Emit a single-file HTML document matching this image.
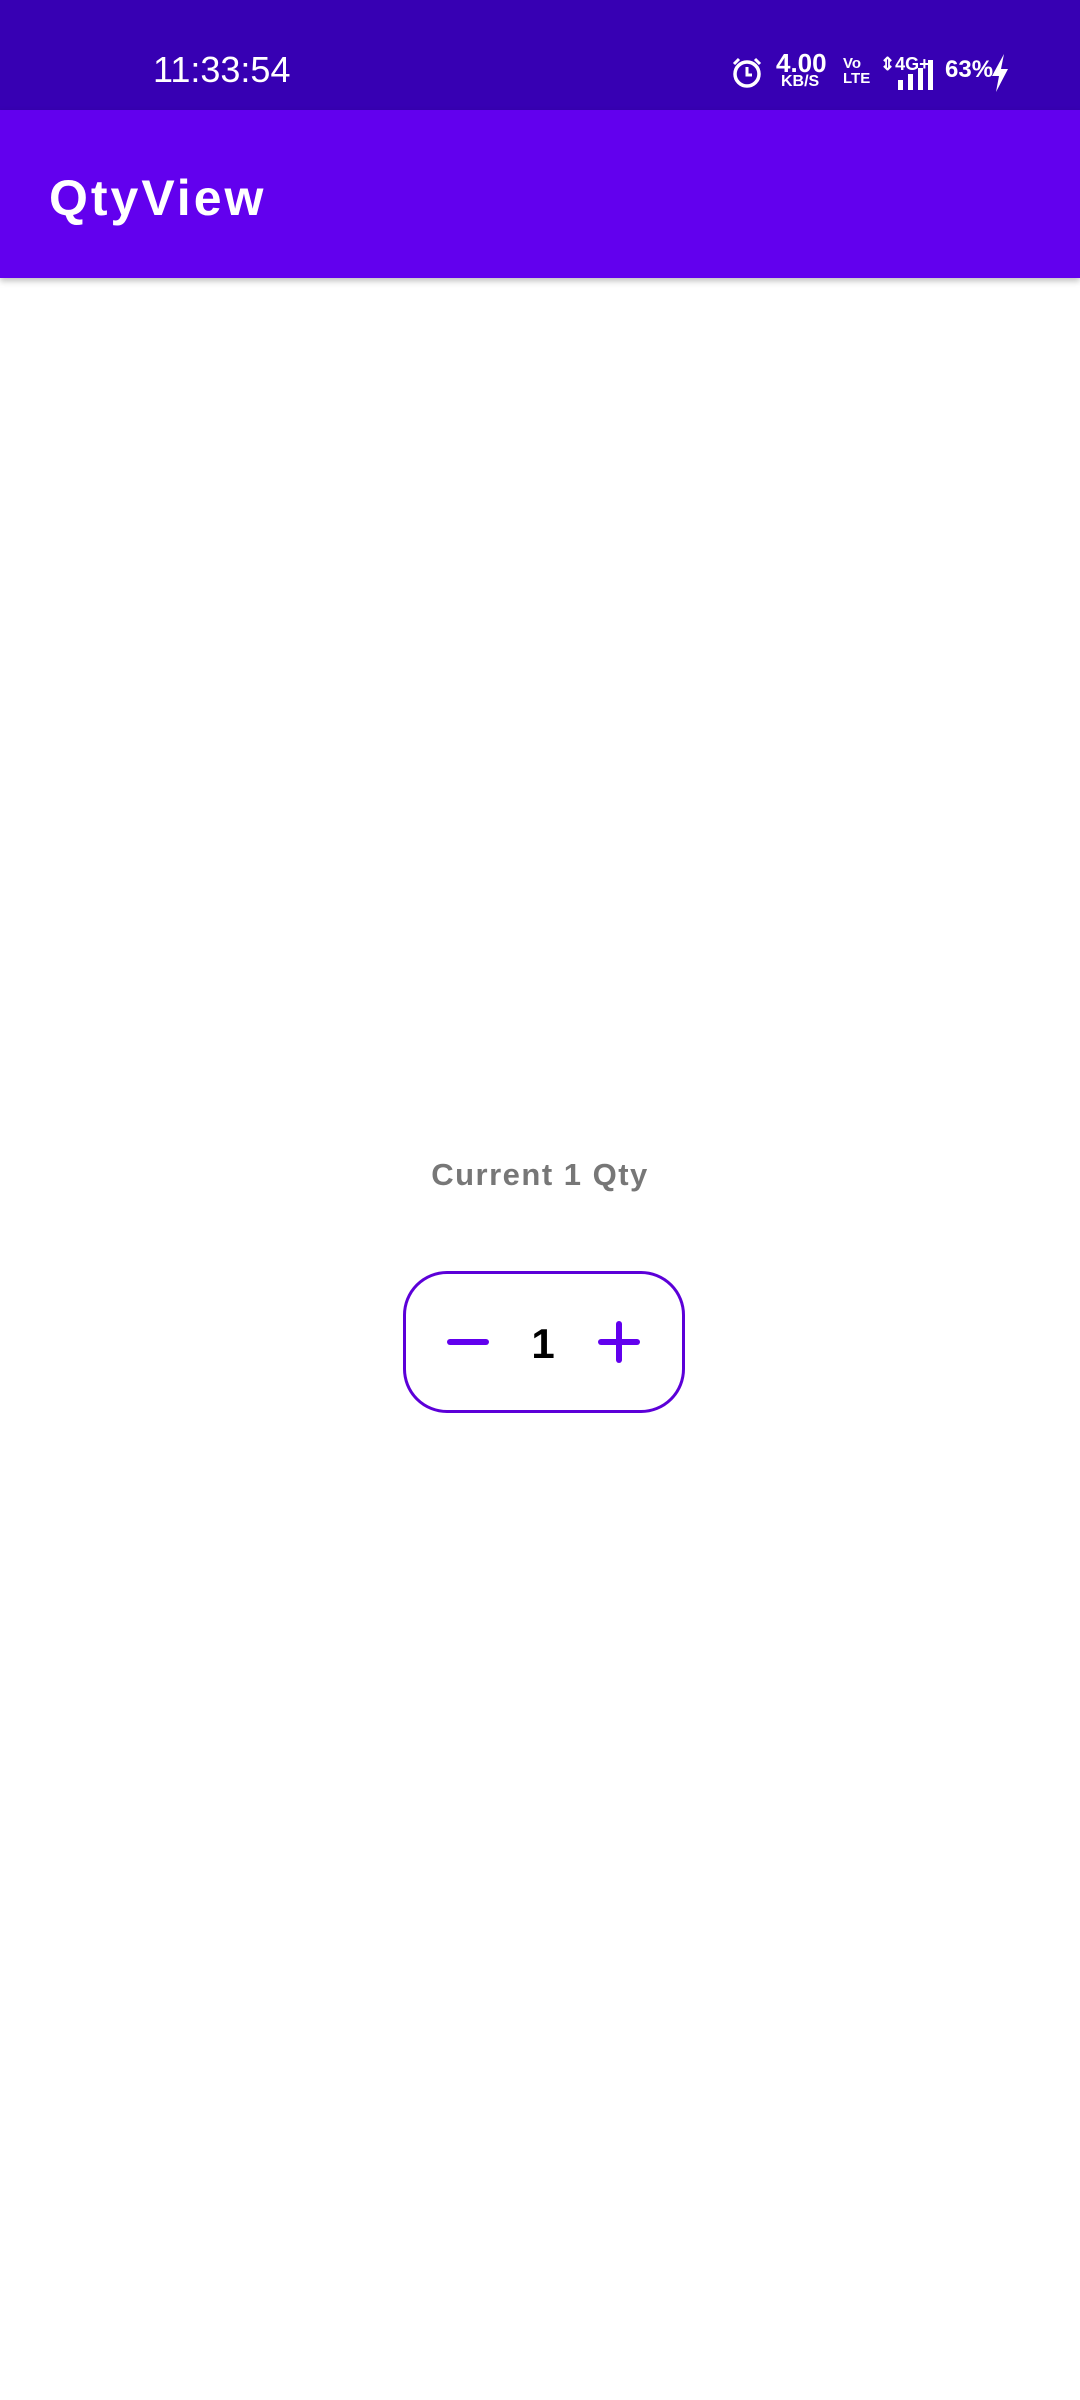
<!DOCTYPE html>
<html><head><style>
body{margin:0;width:1080px;height:2400px;background:#fff;position:relative;overflow:hidden;font-family:"Liberation Sans",sans-serif}
.sb{position:absolute;left:0;top:0;width:1080px;height:110px;background:#3700b3}
.ab{position:absolute;left:0;top:110px;width:1080px;height:168px;background:#6200ee;box-shadow:0 3px 6px rgba(0,0,0,.25)}
.t{position:absolute;color:#fff;white-space:nowrap}
</style></head><body>
<div class="sb">
<div class="t" style="left:153px;top:50px;font-size:36px;line-height:40px">11:33:54</div>
<svg style="position:absolute;left:730px;top:56px" width="34" height="34" viewBox="0 0 34 34"><circle cx="17" cy="18" r="12" fill="none" stroke="#fff" stroke-width="3.5"/><path d="M17 11v8h5M4 8l5-5M30 8l-5-5" stroke="#fff" stroke-width="3" fill="none"/></svg>
<div class="t" style="left:776px;top:50px;font-size:26px;font-weight:bold;line-height:26px">4.00</div>
<div class="t" style="left:781px;top:74px;font-size:16px;font-weight:bold;line-height:16px">KB/S</div>
<div class="t" style="left:843px;top:56px;font-size:15px;font-weight:bold;line-height:15px">Vo<br>LTE</div>
<div class="t" style="left:880px;top:54px;font-size:18px;font-weight:bold">⇕4G+</div>
<svg style="position:absolute;left:896px;top:58px" width="40" height="32"><rect x="2" y="22" width="5" height="10" fill="#fff"/><rect x="12" y="16" width="5" height="16" fill="#fff"/><rect x="22" y="10" width="5" height="22" fill="#fff"/><rect x="32" y="2" width="5" height="30" fill="#fff"/></svg>
<div class="t" style="left:945px;top:56px;font-size:24px;font-weight:bold">63%</div>
<svg style="position:absolute;left:990px;top:54px" width="20" height="38"><path d="M14 0L2 22h7L6 38 18 15h-7z" fill="#fff"/></svg>
</div>
<div class="ab"><div class="t" style="left:49px;top:60px;font-size:50px;font-weight:bold;line-height:56px;letter-spacing:3px">QtyView</div></div>
<div style="position:absolute;left:0;width:1080px;top:1155px;text-align:center;font-size:31px;font-weight:bold;color:#777;line-height:40px;letter-spacing:1.5px">Current 1 Qty</div>
<div style="position:absolute;left:403px;top:1271px;width:276px;height:136px;border:3px solid #5c00d8;border-radius:44px"></div>
<div style="position:absolute;left:447px;top:1339px;width:42px;height:6px;border-radius:3px;background:#6200ee"></div>
<div style="position:absolute;left:598px;top:1339px;width:42px;height:6px;border-radius:3px;background:#6200ee"></div>
<div style="position:absolute;left:616px;top:1321px;width:6px;height:42px;border-radius:3px;background:#6200ee"></div>
<div style="position:absolute;left:520px;width:46px;top:1320px;text-align:center;font-size:42px;font-weight:bold;color:#000;line-height:48px">1</div>
</body></html>
